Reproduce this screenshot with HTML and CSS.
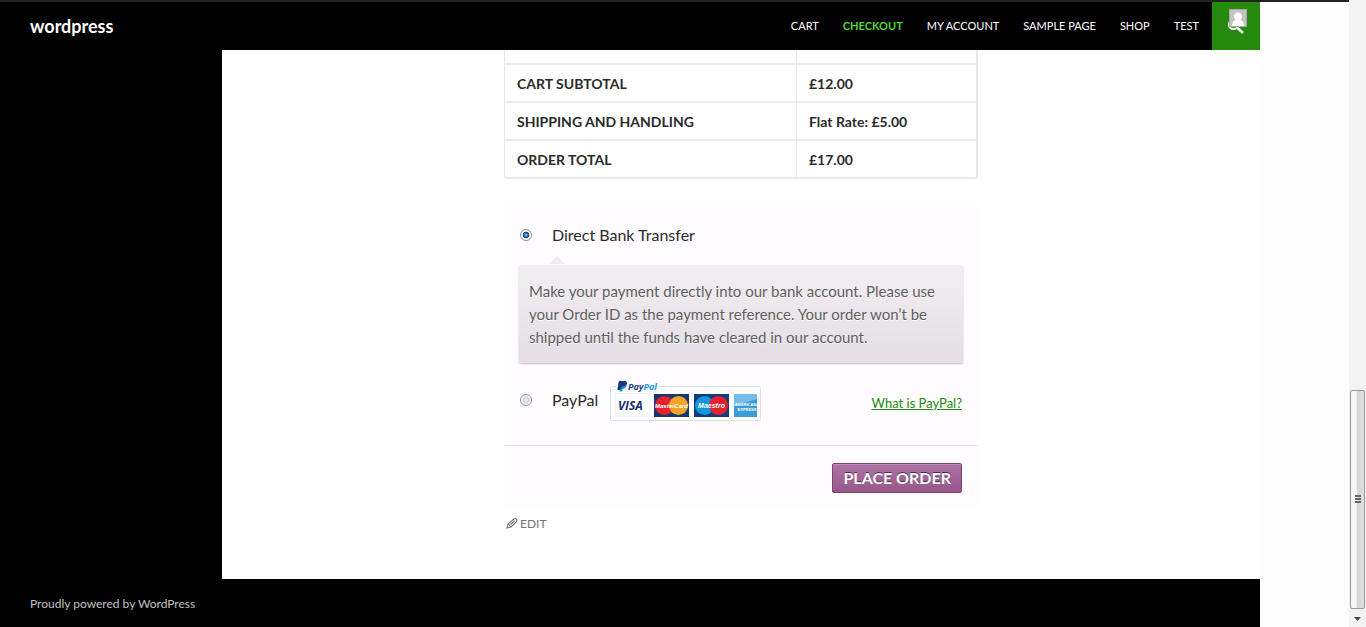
FILE: index.html
```html
<!DOCTYPE html>
<html lang="en">
<head>
<meta charset="utf-8">
<title>Checkout | wordpress</title>
<link rel="stylesheet" href="styles.css">
</head>
<body>
<div class="window">
  <div class="page">
    <div class="admin-strip"></div>
    <div class="site">
      <header class="site-header">
        <a class="site-title" href="#">wordpress</a>
        <nav class="primary-nav">
          <a href="#">Cart</a>
          <a href="#" class="current">Checkout</a>
          <a href="#">My Account</a>
          <a href="#">Sample Page</a>
          <a href="#">Shop</a>
          <a href="#">Test</a>
        </nav>
        <button class="search-toggle" type="button" aria-label="Search">
          <svg width="20" height="28" viewBox="0 0 20 28" aria-hidden="true">
            <circle cx="6.5" cy="15.500" r="4.500" fill="none" stroke="#fff" stroke-width="2"/>
            <path d="M10 18.500l6 5.500" stroke="#fff" stroke-width="2.400"/>
            <rect x="2.500" y=".500" width="17" height="17" fill="#c3c3c3" stroke="#aaa"/>
            <path d="M5 17c0-4 1.500-5.500 4-6-1.500-1-2-2.300-2-3.500C7 5 8.700 3.500 11 3.500S15 5 15 7.500c0 1.200-.5 2.500-2 3.500 2.500.5 4 2 4 6z" fill="#fff"/>
          </svg>
        </button>
      </header>
      <main class="content">
        <div class="entry">
          <table class="totals">
            <tbody>
              <tr class="cut"><td></td><td></td></tr>
              <tr><th scope="row">Cart Subtotal</th><td>£12.00</td></tr>
              <tr><th scope="row">Shipping and Handling</th><td>Flat Rate: £5.00</td></tr>
              <tr><th scope="row">Order Total</th><td>£17.00</td></tr>
            </tbody>
          </table>
          <form class="payment">
            <div class="methods">
              <div class="method">
                <input type="radio" name="pay" id="bacs" checked>
                <label for="bacs">Direct Bank Transfer</label>
              </div>
              <p class="payment-box">Make your payment directly into our bank account. Please use your Order ID as the payment reference. Your order won’t be shipped until the funds have cleared in our account.</p>
              <div class="method paypal">
                <input type="radio" name="pay" id="paypal">
                <label for="paypal">PayPal</label>
                <svg class="cards" width="151" height="42" viewBox="0 0 151 42" role="img" aria-label="PayPal acceptance marks">
                  <rect x=".5" y="7.500" width="150" height="34" rx="2" fill="#fff" stroke="#dcdce2"/>
                  <rect x="6" y="0" width="43" height="13" fill="#fefcfe"/>
                  <path d="M9 2h5c3 0 3.500 2 2.500 4s-2.500 2.500-4.500 2.500L11.500 11H7.500z" fill="#173b80"/>
                  <path d="M11 5h5c1.500 2-.5 5-3.500 5l-.5 2.500H9.500z" fill="#1693d1"/>
                  <path d="M9 2h5c2.500 0 3 2 2 3.500s-2 2-4 2L11 10H7.500z" fill="#173b80"/>
                  <text class="pp-mark" x="18" y="11"><tspan fill="#21417f">Pay</tspan><tspan fill="#1c96d5">Pal</tspan></text>
                  <rect x="5.500" y="14.500" width="34" height="23" fill="#fff" stroke="#f3f3f6"/>
                  <text class="visa-mark" x="8" y="31">VISA</text>
                  <rect x="44" y="15" width="35" height="23" fill="#19376f"/>
                  <circle cx="54.500" cy="26.500" r="9.500" fill="#e3202d"/>
                  <circle cx="68.500" cy="26.500" r="9.500" fill="#f5a228"/>
                  <text class="card-mark" x="61.500" y="29">MasterCard</text>
                  <rect x="84" y="15" width="35" height="23" fill="#143c7c"/>
                  <circle cx="94.500" cy="26.500" r="9.500" fill="#1297dc"/>
                  <circle cx="108.500" cy="26.500" r="9.500" fill="#e3202d"/>
                  <text class="card-mark maestro" x="101.500" y="29">Maestro</text>
                  <rect x="124" y="15" width="23" height="23" fill="#3b9bd6"/>
                  <path d="M124 15h23v5l-23 7z" fill="#74bde8"/>
                  <text class="amex-mark" x="135.500" y="27">AMERICAN</text>
                  <text class="amex-mark" x="137" y="32">EXPRESS</text>
                </svg>
                <a class="about" href="#">What is PayPal?</a>
              </div>
            </div>
            <div class="place-order">
              <button type="button">Place order</button>
            </div>
          </form>
          <a class="edit" href="#">
            <svg width="12" height="14" viewBox="0 0 12 14" aria-hidden="true">
              <path d="M1 11l1-4 6-5q1-.8 2 0l.6.8q.6 1-.2 2L5 10zM2.200 7.200L5 9.800M4.500 7.500L8.500 4" fill="none" stroke="#767676" stroke-width="1.100"/>
            </svg>
            <span>Edit</span>
          </a>
        </div>
      </main>
      <footer class="site-footer"><a href="#">Proudly powered by WordPress</a></footer>
    </div>
  </div>
  <div class="scrollbar" aria-hidden="true">
    <div class="thumb"><i></i><i></i><i></i></div>
    <svg width="15" height="18" viewBox="0 0 15 18"><path d="M4 8h7l-3.500 4z" fill="#444"/></svg>
  </div>
</div>
</body>
</html>
```
FILE: styles.css
```css
* { box-sizing: border-box; }
body {
  margin: 0;
  font-family: Lato, "Liberation Sans", sans-serif;
  font-size: 16px;
  color: #2b2b2b;
  background: #fcfcfc;
}
a { color: inherit; text-decoration: none; }
.window { display: flex; min-height: 100vh; }
.page { flex: 1; display: flex; flex-direction: column; }
.admin-strip { height: 2px; background: #222; }
.site {
  flex: 1;
  display: flex;
  flex-direction: column;
  width: 100%;
  max-width: 1260px;
  background: #000;
}

.site-header {
  display: flex;
  align-items: center;
  height: 48px;
  padding-left: 30px;
  color: #fff;
}
.site-title { font-size: 18px; font-weight: 700; }
.primary-nav {
  display: flex;
  gap: 24px;
  margin-left: auto;
  margin-right: 13px;
  padding-bottom: 2px;
  font-size: 11px;
  text-transform: uppercase;
}
.primary-nav .current { color: #55d737; font-weight: 700; }
.search-toggle {
  width: 48px;
  height: 48px;
  padding: 7px 0 0 2px;
  border: 0;
  background: #24890d;
  display: flex;
  align-items: flex-start;
  justify-content: center;
}

.content {
  flex: 1;
  margin-left: 222px;
  padding: 0 24px;
  background: #fff;
}
.entry { max-width: 474px; margin: 0 auto; }
.totals {
  width: 100%;
  border: 1px solid #e8e8e8;
  border-width: 0 2px 2px 1px;
  border-radius: 0 0 3px 3px;
  border-collapse: separate;
  border-spacing: 0;
  table-layout: fixed;
  font-size: 14px;
  line-height: 20px;
}
.totals th, .totals td {
  padding: 9px 12px 7px;
  border-top: 2px solid #ebebeb;
  font-weight: 700;
  text-align: left;
}
.totals td + td, .totals th + td { border-left: 1px solid #e8e8e8; }
.totals th { text-transform: uppercase; }
.totals tr > :last-child { width: 180px; }
.totals .cut td { height: 13px; padding: 0; border-top: 0; }

.payment {
  margin-top: 24px;
  background: #fefcfe;
  border-radius: 4px;
}
.methods { padding: 20px 15px 24px; border-bottom: 1px solid #e2dde2; }
.method { display: flex; align-items: center; line-height: 24px; }
.method input {
  appearance: none;
  width: 12px;
  height: 12px;
  margin: 0 20px 0 1px;
  border: 1px solid #8e8f8f;
  border-radius: 50%;
  background: radial-gradient(#e8e9ea 20%, #cfd2d5 42%, #fff 62%);
}
.method input:checked {
  background: radial-gradient(circle at 50% 50%, #7fd4f4 0, #2580b3 25%, #12395c 42%, #fff 52%);
}
.payment-box {
  position: relative;
  margin: 18px 0 16px;
  padding: 15px 10px 14px;
  border-radius: 2px;
  background: linear-gradient(#f1eef2, #e4dee4);
  box-shadow: 0 1px 2px rgba(0, 0, 0, .25);
  color: #5e5e5e;
  font-size: 15px;
  line-height: 23px;
  text-shadow: 0 1px 0 rgba(255, 255, 255, .8);
}
.payment-box::before {
  content: "";
  position: absolute;
  left: 30px;
  top: -9px;
  border: 8px solid transparent;
  border-top: 0;
  border-bottom-color: #efecf0;
}
.cards { margin-left: 12px; }
.pp-mark { font: italic 700 9px "Open Sans", sans-serif; }
.visa-mark { font: italic 700 12px "Open Sans", sans-serif; fill: #1b2f72; }
.card-mark { font: italic 700 6px "Liberation Sans", sans-serif; fill: #fff; text-anchor: middle; }
.maestro { font-size: 7px; }
.amex-mark { font: 700 4px "Liberation Sans", sans-serif; fill: #fff; text-anchor: middle; }
.about {
  margin-left: auto;
  padding: 6px 1px 0 0;
  color: #24890d;
  font-size: 13px;
  text-decoration: underline;
}
.place-order { display: flex; justify-content: flex-end; padding: 17px 16px 15px; }
.place-order button {
  height: 30px;
  padding: 0 10px;
  border: 1px solid #76456c;
  border-radius: 2px;
  background: linear-gradient(#b071a4, #96588a);
  box-shadow: inset 0 1px 0 rgba(255, 255, 255, .2);
  color: #fff;
  font: 700 16px/28px Lato, sans-serif;
  text-shadow: 0 -1px 0 rgba(0, 0, 0, .6);
  text-transform: uppercase;
}
.edit {
  display: inline-flex;
  align-items: center;
  gap: 2px;
  margin-top: 6px;
  padding-left: 2px;
  color: #767676;
  font-size: 12px;
  line-height: 20px;
  text-transform: uppercase;
}
.site-footer {
  height: 48px;
  padding-left: 30px;
  color: #c0c0c0;
  font-size: 12px;
  line-height: 50px;
}

.scrollbar {
  display: flex;
  flex-direction: column;
  justify-content: flex-end;
  width: 17px;
  padding: 0 1px;
  background: #f3f3f4;
}
.thumb {
  display: flex;
  flex-direction: column;
  align-items: center;
  justify-content: center;
  gap: 1px;
  height: 35vh;
  border: 1px solid #979797;
  border-radius: 2px;
  background: linear-gradient(90deg, #f6f6f7 40%, #d4d4da 50%, #dedee3);
}
.thumb i { width: 6px; height: 2px; background: #666; }
```
